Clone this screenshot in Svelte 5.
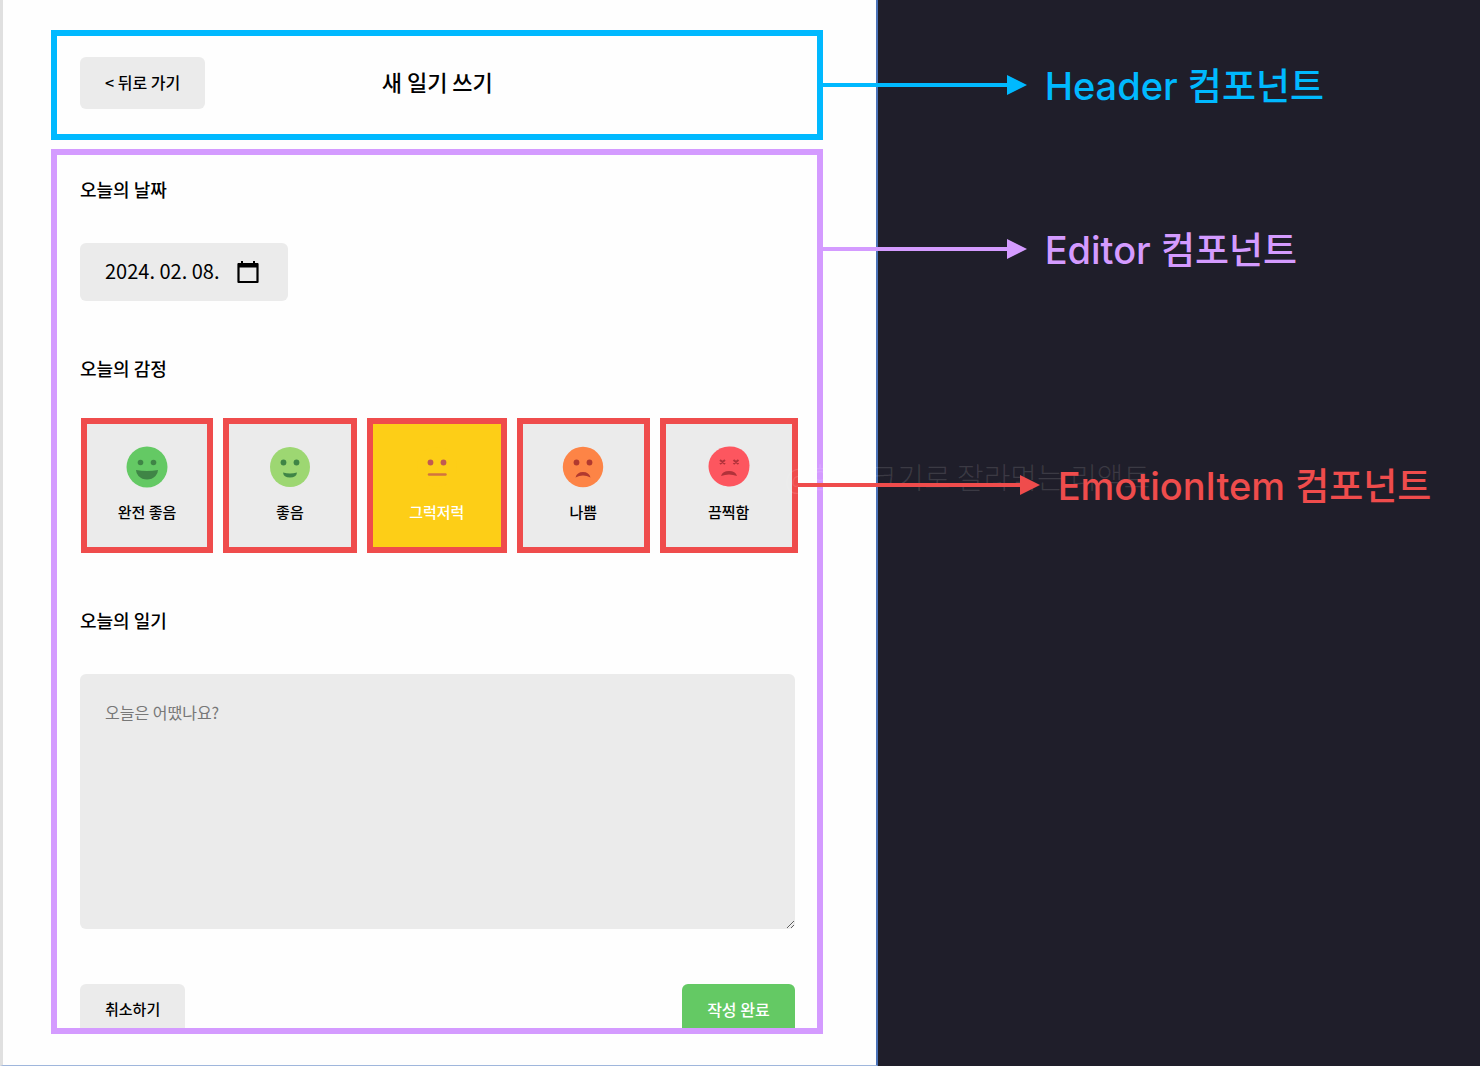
<script>
  let date = $state('2024. 02. 08.');
  let content = $state('');
  let selected = $state(3);

  const emotions = [
    { id: 1, name: '완전 좋음' },
    { id: 2, name: '좋음' },
    { id: 3, name: '그럭저럭' },
    { id: 4, name: '나쁨' },
    { id: 5, name: '끔찍함' }
  ];
</script>

{#snippet callout(name)}
  <svg class="arrow" viewBox="0 0 204 20" preserveAspectRatio="xMaxYMid meet" aria-hidden="true">
    <path d="M-60 10H188" stroke="currentColor" stroke-width="4" />
    <path d="M184 0L204 10L184 20Z" fill="currentColor" />
  </svg>
  <span class="name">{name} <span class="ko">컴포넌트</span></span>
{/snippet}

{#snippet face(id)}
  <svg class="face" viewBox="0 0 42 42" aria-hidden="true">
    {#if id === 1}
      <circle cx="21" cy="21" r="20.5" fill="#64c964" />
      <circle cx="14.5" cy="16.5" r="2.8" fill="#3f8546" />
      <circle cx="27.5" cy="16.5" r="2.8" fill="#3f8546" />
      <path d="M10 24Q21 26 32 24Q32 27 29.5 30Q26 33.5 21 33.5Q16 33.5 12.5 30Q10 27 10 24Z" fill="#3f8546" />
    {:else if id === 2}
      <circle cx="21" cy="21" r="20" fill="#9dd772" />
      <circle cx="14.5" cy="16.5" r="2.9" fill="#3f8546" />
      <circle cx="27.5" cy="16.5" r="2.9" fill="#3f8546" />
      <path d="M14 26.5Q21 28.5 28 26.5Q27.5 31.5 21 31.5Q14.5 31.5 14 26.5Z" fill="#3f8546" />
    {:else if id === 3}
      <circle cx="21" cy="21" r="20" fill="#fdce17" />
      <circle cx="14.5" cy="16.5" r="2.9" fill="#c15a52" />
      <circle cx="27.5" cy="16.5" r="2.9" fill="#c15a52" />
      <path d="M13 28.5H29.500" stroke="#d2743f" stroke-width="2.4" stroke-linecap="round" />
    {:else if id === 4}
      <circle cx="21" cy="21" r="20.2" fill="#fd8446" />
      <circle cx="14.5" cy="16.5" r="2.9" fill="#b1392f" />
      <circle cx="27.5" cy="16.5" r="2.9" fill="#b1392f" />
      <path d="M13.5 31.5Q15 26 21 26Q27 26 28.500 31.500Q21 27.500 13.500 31.500Z" fill="#b1392f" />
    {:else}
      <path d="M21 .5C33 0 41.5 8 41.5 19.5C41.5 32 33 40 22 40.5C10 40.500 .5 32 .5 20C.5 10 9 1 21 .5Z" fill="#fd565f" />
      <path d="M12 14L17 18M17 14L12 18M25.500 14L30.500 18M30.500 14L25.500 18" stroke="#b1323a" stroke-width="2" />
      <path d="M13 30Q14.500 25 21 25Q27.500 25 29 30Q21 27 13 30Z" fill="#b1323a" />
    {/if}
  </svg>
{/snippet}

<main class="board">
  <div class="page">
    <div class="anchor header-part">
      <header class="header">
        <button type="button" class="btn">&lt; 뒤로 가기</button>
        <h1>새 일기 쓰기</h1>
      </header>
      <div class="callout">{@render callout('Header')}</div>
    </div>

    <div class="anchor editor-part">
      <form class="editor">
        <section>
          <h2><label for="date">오늘의 날짜</label></h2>
          <div class="date">
            <input id="date" type="text" bind:value={date} />
            <button type="button" class="calendar" aria-label="날짜 선택">
              <svg viewBox="0 0 22 24" aria-hidden="true">
                <path d="M1.5 4H20.5V22H1.5Z" fill="none" stroke="#000" stroke-width="2.2" stroke-linejoin="round" />
                <path d="M1 3H21V7.5H1ZM4 1H6V4H4ZM16 1H18V4H16Z" fill="#000" />
              </svg>
            </button>
          </div>
        </section>

        <section>
          <h2>오늘의 감정</h2>
          <ul class="emotions">
            {#each emotions as e (e.id)}
              <li>
                <button type="button" class="emotion" class:on={selected === e.id} aria-pressed={selected === e.id} onclick={() => (selected = e.id)}>
                  {@render face(e.id)}
                  <span>{e.name}</span>
                </button>
              </li>
            {/each}
          </ul>
        </section>

        <section>
          <h2><label for="content">오늘의 일기</label></h2>
          <textarea id="content" placeholder="오늘은 어땠나요?" bind:value={content}></textarea>
        </section>

        <div class="actions">
          <button type="button" class="btn cancel">취소하기</button>
          <button type="button" class="btn primary">작성 완료</button>
        </div>
      </form>
      <div class="callout">{@render callout('Editor')}</div>
      <div class="callout item">{@render callout('EmotionItem')}</div>
    </div>
  </div>
  <p class="watermark">@한입 크기로 잘라먹는 리액트</p>
</main>

<style>
  :global(body) {
    margin: 0;
    background: #1f1e2a;
  }

  .board,
  .board :global(*) {
    box-sizing: border-box;
  }

  .board {
    position: relative;
    min-height: 100vh;
    display: flex;
    overflow: hidden;
    font-family: 'Noto Sans CJK KR', sans-serif;
    color: #000;
  }

  .page {
    width: 59.3%;
    min-width: 640px;
    padding: 30px 53px 31px 48px;
    display: flex;
    flex-direction: column;
    gap: 9px;
    background: #fefefe;
    border-left: 3px solid #e0e0e0;
    border-right: 2px solid #4a72b8;
    border-bottom: 1px solid #9fb6dc;
  }

  .anchor {
    position: relative;
  }

  .header-part {
    color: #00b9ff;
  }

  .editor-part {
    color: #d49bff;
  }

  .header {
    display: grid;
    grid-template-columns: 1fr auto 1fr;
    align-items: center;
    justify-items: start;
    padding: 21px 22px 25px 23px;
    border: 6px solid currentColor;
  }

  h1,
  h2 {
    margin: 0;
    color: #000;
    line-height: 24px;
  }

  h1 {
    padding-bottom: 4px;
    font-size: 22px;
    font-weight: 500;
  }

  h2 {
    font-size: 18px;
    font-weight: 500;
  }

  button,
  input,
  textarea {
    font-family: inherit;
    color: #000;
    border: 0;
    margin: 0;
  }

  .btn {
    height: 52px;
    padding: 0 25px 3px;
    border-radius: 6px;
    background: #ebebeb;
    font-size: 16px;
    font-weight: 500;
    white-space: nowrap;
  }

  .cancel {
    font-size: 15px;
  }

  .editor {
    display: flex;
    flex-direction: column;
    gap: 55px;
    padding: 22px 22px 0 23px;
    border: 6px solid currentColor;
  }

  section {
    display: flex;
    flex-direction: column;
    align-items: flex-start;
    gap: 42px;
  }

  .date {
    display: flex;
    align-items: center;
    gap: 16px;
    height: 58px;
    padding: 0 29px 0 25px;
    border-radius: 6px;
    background: #ebebeb;
  }

  .date input {
    width: 116px;
    padding: 0 0 3px;
    background: none;
    font-size: 20px;
  }

  .calendar {
    width: 22px;
    height: 24px;
    padding: 0;
    background: none;
  }

  .calendar svg {
    display: block;
  }

  .emotions {
    display: grid;
    grid-template-columns: 132fr 134fr 140fr 133fr 138fr;
    gap: 10px;
    align-self: stretch;
    margin: -4px -3px 0 1px;
    padding: 0;
    list-style: none;
  }

  .emotion {
    width: 100%;
    height: 135px;
    padding: 0 0 2px;
    display: flex;
    flex-direction: column;
    align-items: center;
    justify-content: center;
    gap: 12px;
    border: 6px solid #ef4c4c;
    background: #ebebeb;
    font-size: 15px;
    font-weight: 500;
    line-height: 24px;
  }

  .emotion.on {
    background: #fdce17;
    color: #fff;
  }

  .face {
    width: 42px;
    height: 42px;
  }

  textarea {
    display: block;
    width: 100%;
    height: 255px;
    padding: 26px 25px;
    border-radius: 6px;
    background: #ebebeb;
    font-size: 16px;
    resize: vertical;
  }

  textarea::placeholder {
    color: #777;
  }

  .actions {
    display: flex;
    justify-content: space-between;
    height: 44px;
    overflow: hidden;
  }

  .primary {
    background: #64c964;
    color: #fff;
  }

  .callout {
    position: absolute;
    top: 31px;
    left: 100%;
    display: flex;
    align-items: center;
    gap: 18px;
    height: 48px;
    white-space: nowrap;
    z-index: 2;
  }

  .editor-part .callout {
    top: 76px;
  }

  .editor-part .item {
    top: 312px;
    margin-left: -25px;
    color: #ef4c4c;
  }

  .arrow {
    flex: none;
    width: 204px;
    height: 20px;
  }

  .item .arrow {
    width: 242px;
  }

  .name {
    padding-top: 2px;
    font-family: Inter, 'Noto Sans CJK KR', sans-serif;
    font-size: 38px;
    font-weight: 500;
    line-height: 48px;
  }

  .ko {
    font-size: 37px;
  }

  .watermark {
    position: absolute;
    top: 456px;
    left: 53%;
    margin: 0;
    font-size: 29px;
    font-weight: 300;
    line-height: 40px;
    white-space: nowrap;
    color: rgba(255, 255, 255, 0.12);
    z-index: 1;
  }
</style>
